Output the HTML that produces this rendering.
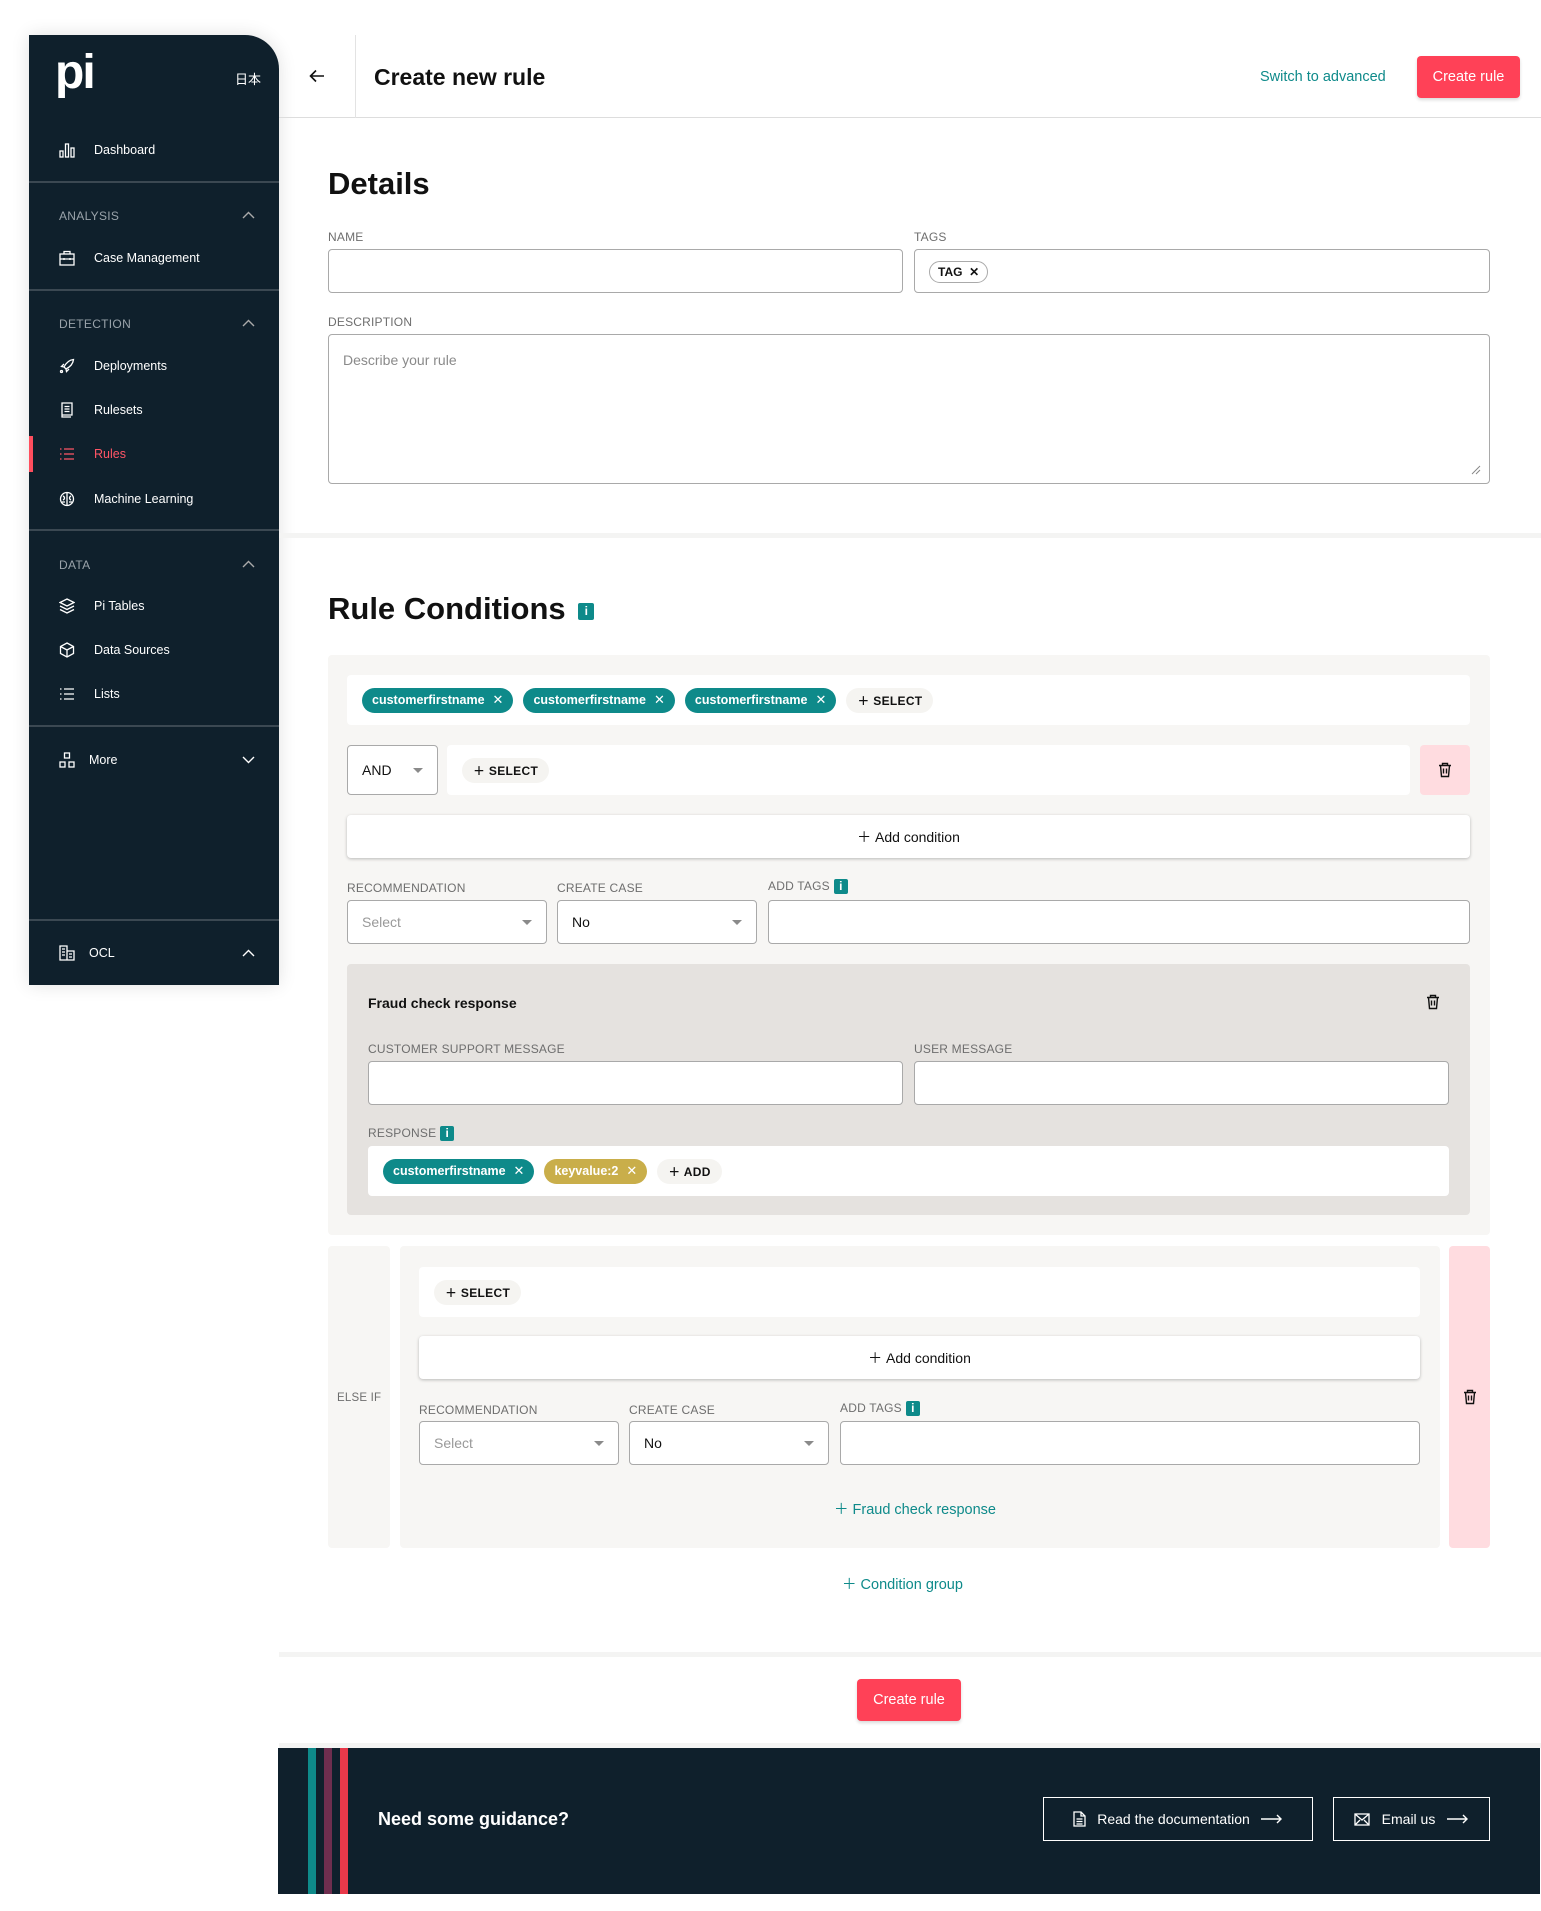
<!DOCTYPE html>
<html><head><meta charset="utf-8"><style>
*{box-sizing:border-box;margin:0;padding:0}
body{width:1541px;height:1911px;background:#fff;font-family:"Liberation Sans","Noto Sans CJK JP",sans-serif;color:#111;position:relative;overflow:hidden}
.a{position:absolute}
.sb{left:29px;top:35px;width:250px;height:950px;background:#0f202c;border-top-right-radius:34px;box-shadow:0 0 18px rgba(0,0,0,.12)}
.nav{position:absolute;left:0;width:250px;color:#fff;font-size:12.5px;display:flex;align-items:center}
.nav svg{position:absolute;left:30px}
.nav span{position:absolute;left:65px}
.sec{position:absolute;left:30px;color:#9aa3aa;font-size:12px;letter-spacing:.3px}
.chev{position:absolute;right:24px}
.hr{position:absolute;left:0;width:250px;height:2px;background:#3b4852}
.lbl{position:absolute;font-size:12px;color:#6e6e6e;letter-spacing:.2px}
.inp{position:absolute;background:#fff;border:1px solid #a9a9a9;border-radius:4px}
.chip{display:inline-flex;align-items:center;height:25px;border-radius:13px;background:#0e8a8a;color:#fff;font-size:12.5px;font-weight:600;padding:0 10px;margin-right:10px}
.chip b{font-weight:normal;margin-left:8px;font-size:13px}
.sel{display:inline-flex;align-items:center;height:25px;border-radius:13px;background:#f5f4f1;font-size:12px;font-weight:600;padding:0 11px;letter-spacing:.3px}
.white{position:absolute;background:#fff;border-radius:4px;display:flex;align-items:center;padding-left:15px}
.addc{position:absolute;background:#fff;border-radius:4px;box-shadow:0 1px 3px rgba(0,0,0,.25);display:flex;align-items:center;justify-content:center;font-size:14px}
.dd{position:absolute;background:#fff;border:1px solid #a9a9a9;border-radius:4px;font-size:14px;display:flex;align-items:center;padding-left:14px}
.dd:after{content:"";position:absolute;right:14px;top:50%;margin-top:-2px;border:5px solid transparent;border-top:5px solid #8a8a8a;border-bottom:0}
.info{display:inline-block;width:14px;height:15px;background:#0e8a8a;border-radius:2px;color:#fff;font-size:12px;font-weight:bold;text-align:center;line-height:15px;vertical-align:middle;margin-left:4px}
.teal{color:#0e8a8a}
</style></head><body>

<!-- sidebar -->
<div class="a sb">
 <div class="a" style="left:26px;top:14px;color:#fff;font-size:48px;font-weight:bold;letter-spacing:-2px;line-height:48px">pi</div>
 <div class="a" style="left:206px;top:34px;color:#fff;font-size:13px">日本</div>
 <div class="nav" style="top:107px;height:16px"><svg width="16" height="16" viewBox="0 0 16 16" fill="none" stroke="#fff" stroke-width="1.3"><rect x="1" y="9" width="3" height="6"/><rect x="6.5" y="2" width="3" height="13"/><rect x="12" y="6" width="3" height="9"/></svg><span>Dashboard</span></div>
 <div class="hr" style="top:146px"></div>
 <div class="sec" style="top:174px">ANALYSIS</div><svg class="chev" style="top:176px" width="13" height="8" viewBox="0 0 13 8" fill="none" stroke="#aaa" stroke-width="1.4"><path d="M1 7l5.5-5.5L12 7"/></svg>
 <div class="nav" style="top:215px;height:16px"><svg width="16" height="16" viewBox="0 0 16 16" fill="none" stroke="#fff" stroke-width="1.3"><rect x="1" y="4" width="14" height="11"/><path d="M5 4V1.5h6V4M1 9h14M5 8v2M11 8v2"/></svg><span>Case Management</span></div>
 <div class="hr" style="top:254px"></div>
 <div class="sec" style="top:282px">DETECTION</div><svg class="chev" style="top:284px" width="13" height="8" viewBox="0 0 13 8" fill="none" stroke="#aaa" stroke-width="1.4"><path d="M1 7l5.5-5.5L12 7"/></svg>
 <div class="nav" style="top:323px;height:16px"><svg width="16" height="16" viewBox="0 0 16 16" fill="none" stroke="#fff" stroke-width="1.3"><path d="M14.5 1.5C10 2 7 5 5 9l2 2c4-2 7-5 7.5-9.5zM5 9L2.5 8.5 5 6M7 11l.5 2.5L10 11"/><circle cx="2.5" cy="13.5" r="1"/></svg><span>Deployments</span></div>
 <div class="nav" style="top:367px;height:16px"><svg width="16" height="16" viewBox="0 0 16 16" fill="none" stroke="#fff" stroke-width="1.3"><path d="M3 1h10v12H3zM3 13v2h9M5.5 4.5h5M5.5 7h5M5.5 9.5h5"/></svg><span>Rulesets</span></div>
 <div class="a" style="left:0;top:401px;width:4px;height:36px;background:#ff4e5e"></div>
 <div class="nav" style="top:411px;height:16px;color:#ff5566"><svg width="16" height="16" viewBox="0 0 16 16" fill="none" stroke="#ff5566" stroke-width="1.3"><path d="M1 3h1.5M1 8h1.5M1 13h1.5M5 3h10M5 8h10M5 13h10"/></svg><span>Rules</span></div>
 <div class="nav" style="top:456px;height:16px"><svg width="16" height="16" viewBox="0 0 16 16" fill="none" stroke="#fff" stroke-width="1.3"><circle cx="8" cy="8" r="6.5"/><path d="M8 1.5v13M4 5c2 1 2 3 0 4M12 5c-2 1-2 3 0 4M3 11h3M10 11h3"/></svg><span>Machine Learning</span></div>
 <div class="hr" style="top:494px"></div>
 <div class="sec" style="top:523px">DATA</div><svg class="chev" style="top:525px" width="13" height="8" viewBox="0 0 13 8" fill="none" stroke="#aaa" stroke-width="1.4"><path d="M1 7l5.5-5.5L12 7"/></svg>
 <div class="nav" style="top:563px;height:16px"><svg width="16" height="16" viewBox="0 0 16 16" fill="none" stroke="#fff" stroke-width="1.3"><path d="M8 1l7 3.5-7 3.5-7-3.5zM1 8l7 3.5L15 8M1 11.5L8 15l7-3.5"/></svg><span>Pi Tables</span></div>
 <div class="nav" style="top:607px;height:16px"><svg width="16" height="16" viewBox="0 0 16 16" fill="none" stroke="#fff" stroke-width="1.3"><path d="M8 1l6.5 3.5v7L8 15l-6.5-3.5v-7zM1.5 4.5L8 8l6.5-3.5M8 8v7"/></svg><span>Data Sources</span></div>
 <div class="nav" style="top:651px;height:16px"><svg width="16" height="16" viewBox="0 0 16 16" fill="none" stroke="#fff" stroke-width="1.3"><path d="M1 3h1.5M1 8h1.5M1 13h1.5M5 3h10M5 8h10M5 13h10"/></svg><span>Lists</span></div>
 <div class="hr" style="top:690px"></div>
 <div class="nav" style="top:717px;height:16px"><svg width="16" height="16" viewBox="0 0 16 16" fill="none" stroke="#fff" stroke-width="1.3"><rect x="5.5" y="1" width="5" height="5"/><rect x="1" y="10" width="5" height="5"/><rect x="10" y="10" width="5" height="5"/></svg><span style="left:60px">More</span></div>
 <svg class="chev" style="top:721px" width="13" height="8" viewBox="0 0 13 8" fill="none" stroke="#fff" stroke-width="1.4"><path d="M1 1l5.5 5.5L12 1"/></svg>
 <div class="hr" style="top:884px"></div>
 <div class="nav" style="top:910px;height:16px"><svg width="16" height="16" viewBox="0 0 16 16" fill="none" stroke="#fff" stroke-width="1.3"><path d="M1 1h7v14H1zM8 6h7v9H8M3 4h3M3 7h3M3 10h3M10 9h3M10 12h3"/></svg><span style="left:60px">OCL</span></div>
 <svg class="chev" style="top:914px" width="13" height="8" viewBox="0 0 13 8" fill="none" stroke="#fff" stroke-width="1.4"><path d="M1 7l5.5-5.5L12 7"/></svg>
</div>

<!-- header -->
<div class="a" style="left:279px;top:117px;width:1262px;height:1px;background:#ddd"></div>
<div class="a" style="left:355px;top:35px;width:1px;height:83px;background:#e3e3e3"></div>
<svg class="a" style="left:309px;top:69px" width="16" height="14" viewBox="0 0 16 14" fill="none" stroke="#111" stroke-width="1.6"><path d="M15 7H2M7 1.5L1.5 7 7 12.5"/></svg>
<div class="a" style="left:374px;top:64px;font-size:23px;font-weight:600">Create new rule</div>
<div class="a teal" style="left:1260px;top:69px;font-size:14.5px">Switch to advanced</div>
<div class="a" style="left:1417px;top:56px;width:103px;height:42px;background:#ff4157;border-radius:4px;color:#fff;font-size:14.5px;display:flex;align-items:center;justify-content:center;box-shadow:0 2px 3px rgba(0,0,0,.15)">Create rule</div>

<!-- details -->
<div class="a" style="left:328px;top:166px;font-size:31px;font-weight:bold">Details</div>
<div class="lbl" style="left:328px;top:230px">NAME</div>
<div class="lbl" style="left:914px;top:230px">TAGS</div>
<div class="inp" style="left:328px;top:249px;width:575px;height:44px"></div>
<div class="inp" style="left:914px;top:249px;width:576px;height:44px"><span class="a" style="left:14px;top:11px;height:22px;border:1px solid #aaa;border-radius:11px;font-size:12px;font-weight:600;padding:0 8px;line-height:20px">TAG &nbsp;✕</span></div>
<div class="lbl" style="left:328px;top:315px">DESCRIPTION</div>
<div class="inp" style="left:328px;top:334px;width:1162px;height:150px"><span class="a" style="left:14px;top:17px;font-size:14px;color:#8a8a8a">Describe your rule</span>
<svg class="a" style="right:8px;bottom:8px" width="12" height="12" viewBox="0 0 12 12" stroke="#888"><path d="M11 3L3 11M11 7L7 11"/></svg></div>
<div class="a" style="left:279px;top:533px;width:1262px;height:5px;background:#f4f4f3"></div>

<!-- rule conditions -->
<div class="a" style="left:328px;top:591px;font-size:31px;font-weight:bold">Rule Conditions <span class="info" style="width:16px;height:17px;line-height:17px;vertical-align:4px">i</span></div>
<div class="a" style="left:328px;top:655px;width:1162px;height:580px;background:#f7f6f4;border-radius:4px"></div>
<div class="white" style="left:347px;top:675px;width:1123px;height:50px"><span class="chip">customerfirstname<b>✕</b></span><span class="chip">customerfirstname<b>✕</b></span><span class="chip">customerfirstname<b>✕</b></span><span class="sel">＋ SELECT</span></div>
<div class="dd" style="left:347px;top:745px;width:91px;height:50px;background:#fff">AND</div>
<div class="white" style="left:447px;top:745px;width:963px;height:50px"><span class="sel">＋ SELECT</span></div>
<div class="a" style="left:1420px;top:745px;width:50px;height:50px;background:#ffdce0;border-radius:4px"><svg class="a" style="left:18px;top:17px" width="14" height="16" viewBox="0 0 14 16" fill="none" stroke="#111" stroke-width="1.4"><path d="M1 3.5h12M4.5 3.5V1.5h5v2M2.5 3.5l1 11h7l1-11M5.5 6.5v5M8.5 6.5v5"/></svg></div>
<div class="addc" style="left:347px;top:815px;width:1123px;height:43px">＋&nbsp;Add condition</div>
<div class="lbl" style="left:347px;top:881px">RECOMMENDATION</div>
<div class="lbl" style="left:557px;top:881px">CREATE CASE</div>
<div class="lbl" style="left:768px;top:879px">ADD TAGS<span class="info">i</span></div>
<div class="dd" style="left:347px;top:900px;width:200px;height:44px;color:#999">Select</div>
<div class="dd" style="left:557px;top:900px;width:200px;height:44px">No</div>
<div class="inp" style="left:768px;top:900px;width:702px;height:44px"></div>

<div class="a" style="left:347px;top:964px;width:1123px;height:251px;background:#e5e2df;border-radius:4px"></div>
<div class="a" style="left:368px;top:995px;font-size:14px;font-weight:600">Fraud check response</div>
<svg class="a" style="left:1426px;top:994px" width="14" height="16" viewBox="0 0 14 16" fill="none" stroke="#111" stroke-width="1.4"><path d="M1 3.5h12M4.5 3.5V1.5h5v2M2.5 3.5l1 11h7l1-11M5.5 6.5v5M8.5 6.5v5"/></svg>
<div class="lbl" style="left:368px;top:1042px">CUSTOMER SUPPORT MESSAGE</div>
<div class="lbl" style="left:914px;top:1042px">USER MESSAGE</div>
<div class="inp" style="left:368px;top:1061px;width:535px;height:44px"></div>
<div class="inp" style="left:914px;top:1061px;width:535px;height:44px"></div>
<div class="lbl" style="left:368px;top:1126px">RESPONSE<span class="info">i</span></div>
<div class="white" style="left:368px;top:1146px;width:1081px;height:50px"><span class="chip">customerfirstname<b>✕</b></span><span class="chip" style="background:#c9ae4a">keyvalue:2<b>✕</b></span><span class="sel">＋ ADD</span></div>

<!-- else if -->
<div class="a" style="left:328px;top:1246px;width:62px;height:302px;background:#f7f6f4;border-radius:4px"></div>
<div class="lbl" style="left:337px;top:1392px;font-size:11.5px">ELSE IF</div>
<div class="a" style="left:400px;top:1246px;width:1040px;height:302px;background:#f7f6f4;border-radius:4px"></div>
<div class="a" style="left:1449px;top:1246px;width:41px;height:302px;background:#ffdce0;border-radius:4px"><svg class="a" style="left:14px;top:143px" width="14" height="16" viewBox="0 0 14 16" fill="none" stroke="#111" stroke-width="1.4"><path d="M1 3.5h12M4.5 3.5V1.5h5v2M2.5 3.5l1 11h7l1-11M5.5 6.5v5M8.5 6.5v5"/></svg></div>
<div class="white" style="left:419px;top:1267px;width:1001px;height:50px"><span class="sel">＋ SELECT</span></div>
<div class="addc" style="left:419px;top:1336px;width:1001px;height:43px">＋&nbsp;Add condition</div>
<div class="lbl" style="left:419px;top:1403px">RECOMMENDATION</div>
<div class="lbl" style="left:629px;top:1403px">CREATE CASE</div>
<div class="lbl" style="left:840px;top:1401px">ADD TAGS<span class="info">i</span></div>
<div class="dd" style="left:419px;top:1421px;width:200px;height:44px;color:#999">Select</div>
<div class="dd" style="left:629px;top:1421px;width:200px;height:44px">No</div>
<div class="inp" style="left:840px;top:1421px;width:580px;height:44px"></div>
<div class="a teal" style="left:834px;top:1498px;font-size:14.5px">＋&nbsp;Fraud check response</div>
<div class="a teal" style="left:842px;top:1573px;font-size:14.5px">＋&nbsp;Condition group</div>

<div class="a" style="left:279px;top:1652px;width:1262px;height:5px;background:#f4f4f3"></div>
<div class="a" style="left:857px;top:1679px;width:104px;height:42px;background:#ff4157;border-radius:4px;color:#fff;font-size:14.5px;display:flex;align-items:center;justify-content:center;box-shadow:0 2px 3px rgba(0,0,0,.15)">Create rule</div>
<div class="a" style="left:279px;top:1743px;width:1262px;height:5px;background:#f4f4f3"></div>

<!-- footer -->
<div class="a" style="left:278px;top:1748px;width:1262px;height:146px;background:#0f202c"></div>
<div class="a" style="left:308px;top:1748px;width:8px;height:146px;background:#0e8a8a"></div>
<div class="a" style="left:324px;top:1748px;width:8px;height:146px;background:#6e2e4f"></div>
<div class="a" style="left:340px;top:1748px;width:8px;height:146px;background:#e8394a"></div>
<div class="a" style="left:378px;top:1809px;color:#fff;font-size:18px;font-weight:600">Need some guidance?</div>
<div class="a" style="left:1043px;top:1797px;width:270px;height:44px;border:1.5px solid #fff;color:#fff;font-size:14px;display:flex;align-items:center;justify-content:center"><svg width="13" height="16" viewBox="0 0 13 16" fill="none" stroke="#fff" stroke-width="1.3"><path d="M1 1h7l4 4v10H1zM8 1v4h4M3.5 8h6M3.5 10.5h6M3.5 13h6"/></svg>&nbsp;&nbsp;&nbsp;Read the documentation&nbsp;&nbsp;&nbsp;<svg width="22" height="10" viewBox="0 0 22 10" fill="none" stroke="#fff" stroke-width="1.4"><path d="M0 5h20M16 1l4 4-4 4"/></svg></div>
<div class="a" style="left:1333px;top:1797px;width:157px;height:44px;border:1.5px solid #fff;color:#fff;font-size:14px;display:flex;align-items:center;justify-content:center"><svg width="16" height="13" viewBox="0 0 16 13" fill="none" stroke="#fff" stroke-width="1.3"><rect x="1" y="1" width="14" height="11"/><path d="M1 1l7 6 7-6M1 12l5-5M15 12l-5-5"/></svg>&nbsp;&nbsp;&nbsp;Email us&nbsp;&nbsp;&nbsp;<svg width="22" height="10" viewBox="0 0 22 10" fill="none" stroke="#fff" stroke-width="1.4"><path d="M0 5h20M16 1l4 4-4 4"/></svg></div>
</body></html>
